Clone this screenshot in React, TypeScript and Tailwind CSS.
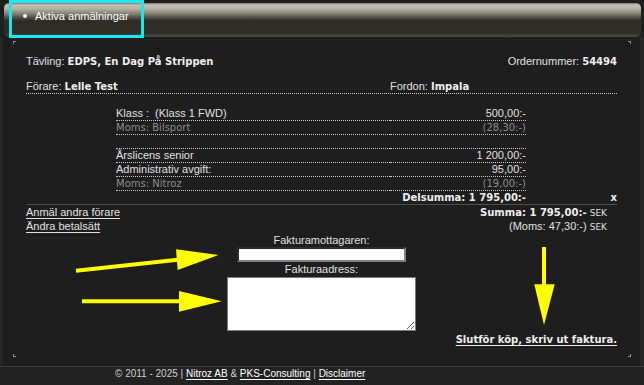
import React from "react";

const B = "font-['DejaVu_Sans',sans-serif] font-bold text-[10px] text-[#eeeeee]";
const G = "font-['DejaVu_Sans',sans-serif] text-[10px] text-[#8c8c8c]";

function InnerRow({ left, right, grey }: { left: React.ReactNode; right: React.ReactNode; grey?: boolean }) {
  return (
    <div className="flex h-[14px]">
      <div className="w-[90px]" />
      <div className={`w-[274px] border-b border-dotted border-[#c8c8c8] leading-[13px] ${grey ? G : ""}`}>{left}</div>
      <div className={`w-[136px] border-b border-dotted border-[#c8c8c8] leading-[13px] text-right ${grey ? G : ""}`}>{right}</div>
      <div className="flex-1" />
    </div>
  );
}

export default function App() {
  return (
    <div className="relative w-[644px] h-[385px] overflow-hidden bg-[#222222] text-[11px] leading-[14px] text-[#e0e0e0] font-['Liberation_Sans',Arial,sans-serif]">
      <div className="flex flex-col h-[367px] border-b border-[#3e3e3e]">
        {/* header bar */}
        <div className="pl-[4px] pr-[3px] pt-[3px] bg-[#1f1f1f]">
          <div className="h-[34px] rounded-[5px] bg-[linear-gradient(180deg,#7a776d_0px,#c6c3b6_2px,#b3b0a2_6px,#807d72_11px,#4a4840_15px,#2d2c27_18px,#302f2a_30px,#4b4943_34px)] flex items-start pt-[6px] pl-[19px]">
            <span className="mt-[5px] w-[4px] h-[4px] rounded-full bg-white" />
            <span className="ml-[8px] text-white">Aktiva anmälningar</span>
          </div>
        </div>
        {/* main panel */}
        <div className="flex-1 flex flex-col bg-[#1e1e1e] border-l-[3px] border-l-[#262626] border-r-[4px] border-r-[#262626]">
          <div className="mt-[4px] pl-[10px] pr-[9px] flex justify-between">
            <span className="w-[3px] h-[3px] border-l border-t border-[#8a8a8a]" />
            <span className="w-[3px] h-[3px] border-r border-t border-[#8a8a8a]" />
          </div>
          <div className="px-[23px] flex flex-col">
            <div className="mt-[10px] h-[14px] flex justify-between">
              <div>
                Tävling: <span className={B}>EDPS, En Dag På Strippen</span>
              </div>
              <div>
                Ordernummer: <span className={B}>54494</span>
              </div>
            </div>
            <div className="mt-[11px] h-[15px] flex border-b border-dotted border-[#c8c8c8]">
              <div className="w-[364px]">
                Förare: <span className={B}>Lelle Test</span>
              </div>
              <div>
                Fordon: <span className={B}>Impala</span>
              </div>
            </div>
            <div className="mt-[13px] flex flex-col">
              <InnerRow left={"Klass :\u00a0 (Klass 1 FWD)"} right="500,00:-" />
              <InnerRow grey left="Moms: Bilsport" right="(28,30:-)" />
              <InnerRow left="" right="" />
              <InnerRow left="Årslicens senior" right="1 200,00:-" />
              <InnerRow left="Administrativ avgift:" right="95,00:-" />
              <InnerRow grey left="Moms: Nitroz" right="(19,00:-)" />
              <div className="flex h-[14px] border-b border-[#4e4e4e] leading-[13px]">
                <div className="w-[500px] text-right">
                  <span className={B}>Delsumma: 1 795,00:-</span>
                </div>
                <div className="flex-1 text-right">
                  <span className={B}>x</span>
                </div>
              </div>
            </div>
            <div className="flex justify-between h-[14px] pr-[10px]">
              <span className="underline underline-offset-2">Anmäl andra förare</span>
              <span>
                <span className={B}>Summa: 1 795,00:-</span>{" "}
                <span className="font-['DejaVu_Sans',sans-serif] text-[9px]">SEK</span>
              </span>
            </div>
            <div className="flex justify-between h-[14px] pr-[10px]">
              <span className="underline underline-offset-2">Ändra betalsätt</span>
              <span>
                (Moms: 47,30:-) <span className="font-['DejaVu_Sans',sans-serif] text-[9px]">SEK</span>
              </span>
            </div>
            <div className="flex flex-col items-center">
              <div className="h-[14px]">Fakturamottagaren:</div>
              <input
                className="w-[169px] h-[15px] p-0 bg-white border-2 border-t-[#2c2c2c] border-l-[#2c2c2c] border-r-[#808080] border-b-[#808080] outline-none"
                type="text"
              />
              <div className="h-[14px]">Fakturaadress:</div>
              <textarea className="mt-[1px] w-[189px] h-[54px] p-0 bg-white border border-[#7a7a7a] outline-none block" />
            </div>
            <div className="mt-[1px] h-[14px] text-right">
              <span className={`${B} underline underline-offset-2`}>Slutför köp, skriv ut faktura.</span>
            </div>
          </div>
          <div className="mt-[8px] pl-[10px] pr-[9px] flex justify-between">
            <span className="w-[3px] h-[3px] border-l border-b border-[#8a8a8a]" />
            <span className="w-[3px] h-[3px] border-r border-b border-[#8a8a8a]" />
          </div>
        </div>
      </div>
      {/* footer */}
      <div className="pl-[115px] h-[14px] text-[10px] text-[#cfcfcf]">
        © 2011 - 2025 | <span className="text-white underline underline-offset-2">Nitroz AB</span> &amp;{" "}
        <span className="text-white underline underline-offset-2">PKS-Consulting</span> |{" "}
        <span className="text-white underline underline-offset-2">Disclaimer</span>
      </div>

      {/* annotation overlay */}
      <div className="absolute left-[9px] top-0 w-[135px] h-[38px] border-[3px] border-[#1de6ee]" />
      <svg className="absolute left-0 top-0 pointer-events-none" width="644" height="385" viewBox="0 0 644 385">
        <line x1="76" y1="270.7" x2="180" y2="259.4" stroke="#ffff00" strokeWidth="4" />
        <polygon points="176,249.3 177.7,270 218.5,255" fill="#ffff00" />
        <line x1="82" y1="301.2" x2="181" y2="301.2" stroke="#ffff00" strokeWidth="4" />
        <polygon points="179,291 179,311.7 221.7,301.3" fill="#ffff00" />
        <line x1="544" y1="247" x2="544" y2="286" stroke="#ffff00" strokeWidth="4" />
        <polygon points="534.3,284.3 554.7,284.3 544,325" fill="#ffff00" />
      </svg>
    </div>
  );
}
